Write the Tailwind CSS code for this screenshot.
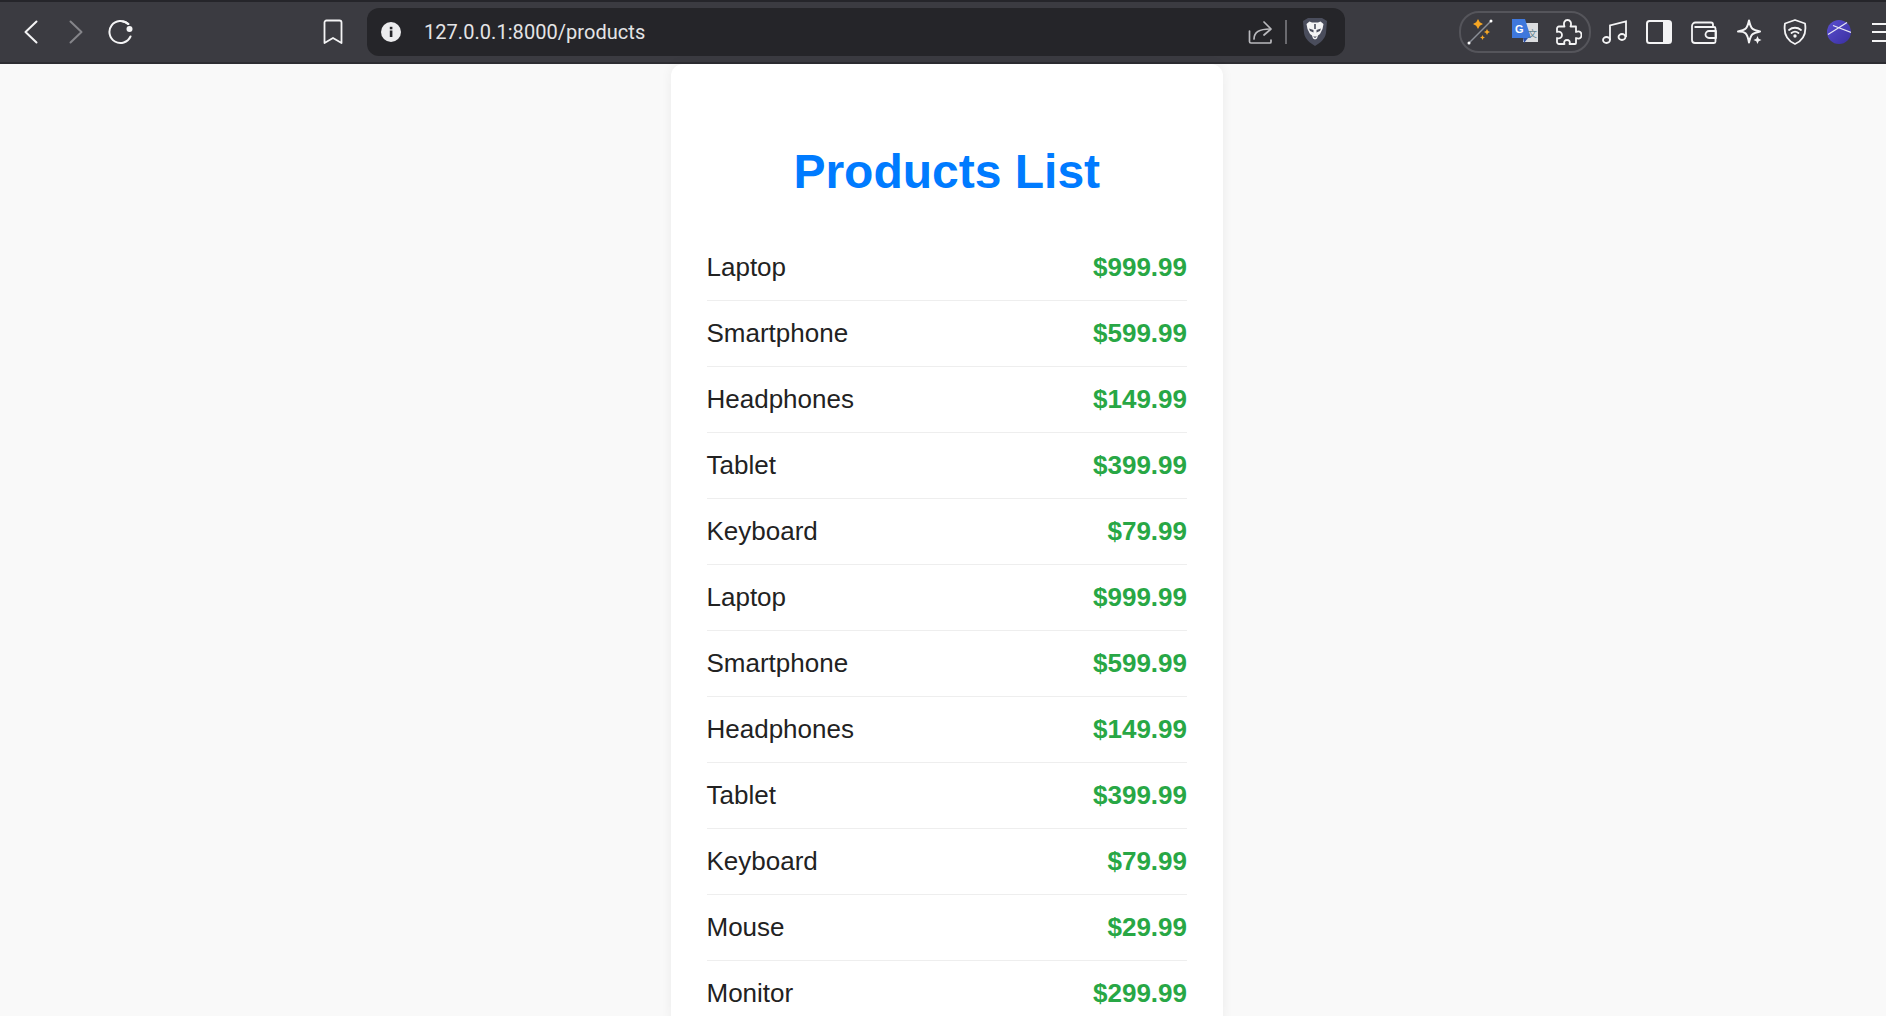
<!DOCTYPE html>
<html lang="en">
<head>
<meta charset="utf-8">
<title>Products</title>
<script src="https://cdn.jsdelivr.net/npm/@tailwindcss/browser@4"></script>
</head>
<body class="h-screen overflow-hidden bg-[#f9f9f9] font-['Liberation_Sans',sans-serif]">
<header class="h-16 bg-[#3b3b41] border-t-2 border-t-[#25252a] border-b-2 border-b-[#2d2d32] flex items-center overflow-hidden text-white">
  <svg class="ml-[24px] shrink-0" width="14" height="24" viewBox="0 0 14 24" fill="none" stroke="#f4f4f5" stroke-width="2" stroke-linecap="round" stroke-linejoin="round"><path d="M12.5 1.5 1.5 12l11 10.5"/></svg>
  <svg class="ml-[31px] shrink-0" width="14" height="24" viewBox="0 0 14 24" fill="none" stroke="#85858a" stroke-width="2" stroke-linecap="round" stroke-linejoin="round"><path d="M1.5 1.5 12.5 12l-11 10.5"/></svg>
  <svg class="ml-[25px] shrink-0" width="26" height="26" viewBox="0 0 26 26" fill="none" stroke="#f4f4f5" stroke-width="2" stroke-linecap="round"><path d="M20 5A11 11 0 1 0 22.5 17.5"/><circle cx="21.5" cy="10" r="3" fill="#f4f4f5" stroke="none"/><path d="M15 2.4A11 11 0 0 1 20.5 5"/></svg>
  <svg class="ml-[189px] shrink-0" width="20" height="26" viewBox="0 0 20 26" fill="none" stroke="#f4f4f5" stroke-width="1.8" stroke-linejoin="round"><path d="M3.5 1.5h13a2 2 0 0 1 2 2V24l-8.500-5-8.500 5V3.500a2 2 0 0 1 2-2z"/></svg>
  <div class="ml-[24px] w-[978px] h-12 shrink-0 rounded-[12px] bg-[#252529] flex items-center">
    <svg class="ml-[14px] shrink-0" width="20" height="20" viewBox="0 0 20 20"><circle cx="10" cy="10" r="10" fill="#ececee"/><rect x="8.800" y="8.500" width="2.600" height="6.500" fill="#252529"/><rect x="8.800" y="4.800" width="2.600" height="2.500" fill="#252529"/></svg>
    <span class="ml-[23px] text-[20px] text-[#e4e4e6] font-['Roboto',sans-serif] tracking-[0.05px]">127.0.0.1:8000/products</span>
    <svg class="ml-auto shrink-0" width="24" height="24" viewBox="0 0 24 24" fill="none" stroke="#b9b9bd" stroke-width="1.700" stroke-linecap="round" stroke-linejoin="round"><path d="M1.500 11v10.500a1.500 1.500 0 0 0 1.500 1.500h19a1 1 0 0 0 1-1v-2"/><path d="M6 19c0-6.500 5-10 16-10"/><path d="M16 2l7 7-7 6"/></svg>
    <div class="ml-[13px] w-[2px] h-[24px] bg-[#6a6a6f] shrink-0"></div>
    <svg class="ml-[16px] shrink-0" width="24" height="28" viewBox="0 0 24 28"><path d="M5 0h14l5 3-1 12c-1 6-6 10-11 13C7 25 2 21 1 15L0 3z" fill="#4a4d5c"/><path d="M6.500 3.500 9 4.500h6l2.500-1 3 2.500-1 5-2.500 5-2 1.500-1 3-2 1-2-1-1-3-2-1.500-2.500-5-1-5z" fill="#f4f4f5"/><path d="M6 10.500l4.500 1.500v2.500L7 13zM18 10.500 13.500 12v2.500L17 13zM10 18.500h4l-2 1.500zM11.200 6v5h1.600V6z" fill="#4a4d5c"/></svg>
    <div class="w-[18px] shrink-0"></div>
  </div>
  <div class="ml-[114px] w-[132px] h-[42px] shrink-0 border-2 border-[#55555b] rounded-[20px] flex items-center">
    <svg class="ml-[6px] shrink-0" width="26" height="26" viewBox="0 0 26 26"><path d="M2 24 24 2" stroke="#8b8f98" stroke-width="1.500"/><circle cx="2" cy="24" r="1.500" fill="#fff"/><circle cx="24" cy="2" r="1.500" fill="#fff"/><path d="M11 0l1.800 3.200L16 5l-3.200 1.800L11 10 9.200 6.800 6 5l3.200-1.800zM20 10l1 2 2 1-2 1-1 2-1-2-2-1 2-1zM15.500 16l.8 1.700 1.700.8-1.700.8-.8 1.700-.8-1.700-1.700-.8 1.700-.8z" fill="#f6a623"/></svg>
    <svg class="ml-[19px] shrink-0" width="26" height="26" viewBox="0 0 26 26"><rect x="11" y="4" width="15" height="19" fill="#dcdde0"/><path d="M0 0h13l6 19H0z" fill="#3f78dc"/><path d="M11 19h5l-4 5z" fill="#2a4fa8"/><text x="3" y="14" font-family="Liberation Sans" font-weight="700" font-size="11" fill="#fff">G</text><text x="16" y="18" font-family="Noto Sans CJK SC" font-size="9" fill="#5e7f8c">文</text></svg>
    <svg class="ml-[18px] shrink-0" width="26" height="26" viewBox="0 0 26 26" fill="none" stroke="#f4f4f5" stroke-width="1.800" stroke-linejoin="round"><path d="M3 7.500h5.500C7 3.500 9 1 11.500 1S16 3.500 14.500 7.500H20v5.500c4-1.500 5.500.5 5.500 3s-1.500 4.500-5.500 3V24a1 1 0 0 1-1 1h-5.500c1-2.500-.5-4-2.500-4s-3.500 1.500-2.500 4H3a2 2 0 0 1-2-2v-4c3 1 5-.5 5-3s-2-4-5-3V9.500a2 2 0 0 1 2-2z"/></svg>
  </div>
  <svg class="ml-[11px] shrink-0" width="26" height="26" viewBox="0 0 26 26" fill="none" stroke="#f4f4f5" stroke-width="1.800"><ellipse cx="4.500" cy="21" rx="3.500" ry="3"/><ellipse cx="20" cy="18" rx="3.500" ry="3"/><path d="M8 21V6.500L24 2.500V18"/></svg>
  <svg class="ml-[18px] shrink-0" width="26" height="24" viewBox="0 0 26 24"><rect x="1" y="1" width="24" height="22" rx="2.500" fill="none" stroke="#f4f4f5" stroke-width="2"/><rect x="17" y="1" width="8" height="22" fill="#f4f4f5"/></svg>
  <svg class="ml-[19px] shrink-0" width="26" height="24" viewBox="0 0 26 24" fill="none" stroke="#f4f4f5" stroke-width="1.800" stroke-linejoin="round"><path d="M1 6a3.500 3.500 0 0 1 3.500-3.500H20a2 2 0 0 1 2 2V7"/><path d="M1 6v14a3 3 0 0 0 3 3h19a1.500 1.500 0 0 0 1.500-1.500V8.500A1.500 1.500 0 0 0 23 7H3.500"/><path d="M25 11h-7a3.500 3.500 0 0 0 0 7h7z"/></svg>
  <svg class="ml-[20px] shrink-0" width="26" height="26" viewBox="0 0 26 26"><path d="M12 1.500c1 4.500 2 7 3.500 8.300 1.400 1.200 4 1.900 7.500 2.700-3.500.8-6.100 1.500-7.500 2.700-1.500 1.300-2.500 3.800-3.500 8.300C11 18 10 15.500 8.500 14.200 7.100 13 4.500 12.300 1 12.500c3.500-.8 6.100-1.500 7.500-2.700C10 8.500 11 6 12 1.500z" fill="none" stroke="#f4f4f5" stroke-width="2" stroke-linejoin="round"/><path d="M20.500 17l1.200 2.800L24.500 21l-2.800 1.200L20.500 25l-1.200-2.800L16.500 21l2.800-1.200z" fill="#f4f4f5"/></svg>
  <svg class="ml-[20px] shrink-0" width="24" height="26" viewBox="0 0 24 26" fill="none" stroke="#f4f4f5" stroke-width="1.800" stroke-linecap="round" stroke-linejoin="round"><path d="M12 1l10 3.500c1.500 9-1 16.500-10 20.500C3 21 .5 13.500 2 4.500z"/><path d="M6 11c3.500-3 8.500-3 12 0M8.500 14c2-1.500 5-1.500 7 0"/><circle cx="12" cy="17" r=".8" fill="#f4f4f5"/></svg>
  <svg class="ml-[20px] shrink-0" width="24" height="24" viewBox="0 0 24 24"><defs><linearGradient id="av" x1="0" y1="0" x2="1" y2="1"><stop offset="0" stop-color="#5a4fd0"/><stop offset="1" stop-color="#3a2fa0"/></linearGradient></defs><circle cx="12" cy="12" r="12" fill="url(#av)"/><path d="M1 14.500 20 2.500M6 5.500l18 7" stroke="#e8e8f4" stroke-width="1.200" fill="none"/></svg>
  <div class="ml-[21px] w-[20px] shrink-0 flex flex-col gap-[6.500px]">
    <div class="h-[2px] bg-[#f4f4f5]"></div>
    <div class="h-[2px] bg-[#f4f4f5]"></div>
    <div class="h-[2px] bg-[#f4f4f5]"></div>
  </div>
</header>
<main class="ml-[671px] w-[552px] bg-white rounded-[12px] shadow-[0_0_12px_rgba(0,0,0,0.06)] pl-[35.5px] pr-9 pt-[80px]">
  <h1 class="text-[48px] leading-[56px] font-bold text-[#007bff] text-center mb-[35px]">Products List</h1>
  <ul class="text-[26px] text-[#222]">
    <li class="h-[66px] border-b border-[#eee] flex items-center justify-between"><span>Laptop</span><span class="font-bold text-[#28a745]">$999.99</span></li>
    <li class="h-[66px] border-b border-[#eee] flex items-center justify-between"><span>Smartphone</span><span class="font-bold text-[#28a745]">$599.99</span></li>
    <li class="h-[66px] border-b border-[#eee] flex items-center justify-between"><span>Headphones</span><span class="font-bold text-[#28a745]">$149.99</span></li>
    <li class="h-[66px] border-b border-[#eee] flex items-center justify-between"><span>Tablet</span><span class="font-bold text-[#28a745]">$399.99</span></li>
    <li class="h-[66px] border-b border-[#eee] flex items-center justify-between"><span>Keyboard</span><span class="font-bold text-[#28a745]">$79.99</span></li>
    <li class="h-[66px] border-b border-[#eee] flex items-center justify-between"><span>Laptop</span><span class="font-bold text-[#28a745]">$999.99</span></li>
    <li class="h-[66px] border-b border-[#eee] flex items-center justify-between"><span>Smartphone</span><span class="font-bold text-[#28a745]">$599.99</span></li>
    <li class="h-[66px] border-b border-[#eee] flex items-center justify-between"><span>Headphones</span><span class="font-bold text-[#28a745]">$149.99</span></li>
    <li class="h-[66px] border-b border-[#eee] flex items-center justify-between"><span>Tablet</span><span class="font-bold text-[#28a745]">$399.99</span></li>
    <li class="h-[66px] border-b border-[#eee] flex items-center justify-between"><span>Keyboard</span><span class="font-bold text-[#28a745]">$79.99</span></li>
    <li class="h-[66px] border-b border-[#eee] flex items-center justify-between"><span>Mouse</span><span class="font-bold text-[#28a745]">$29.99</span></li>
    <li class="h-[66px] border-b border-[#eee] flex items-center justify-between"><span>Monitor</span><span class="font-bold text-[#28a745]">$299.99</span></li>
  </ul>
</main>
</body>
</html>
